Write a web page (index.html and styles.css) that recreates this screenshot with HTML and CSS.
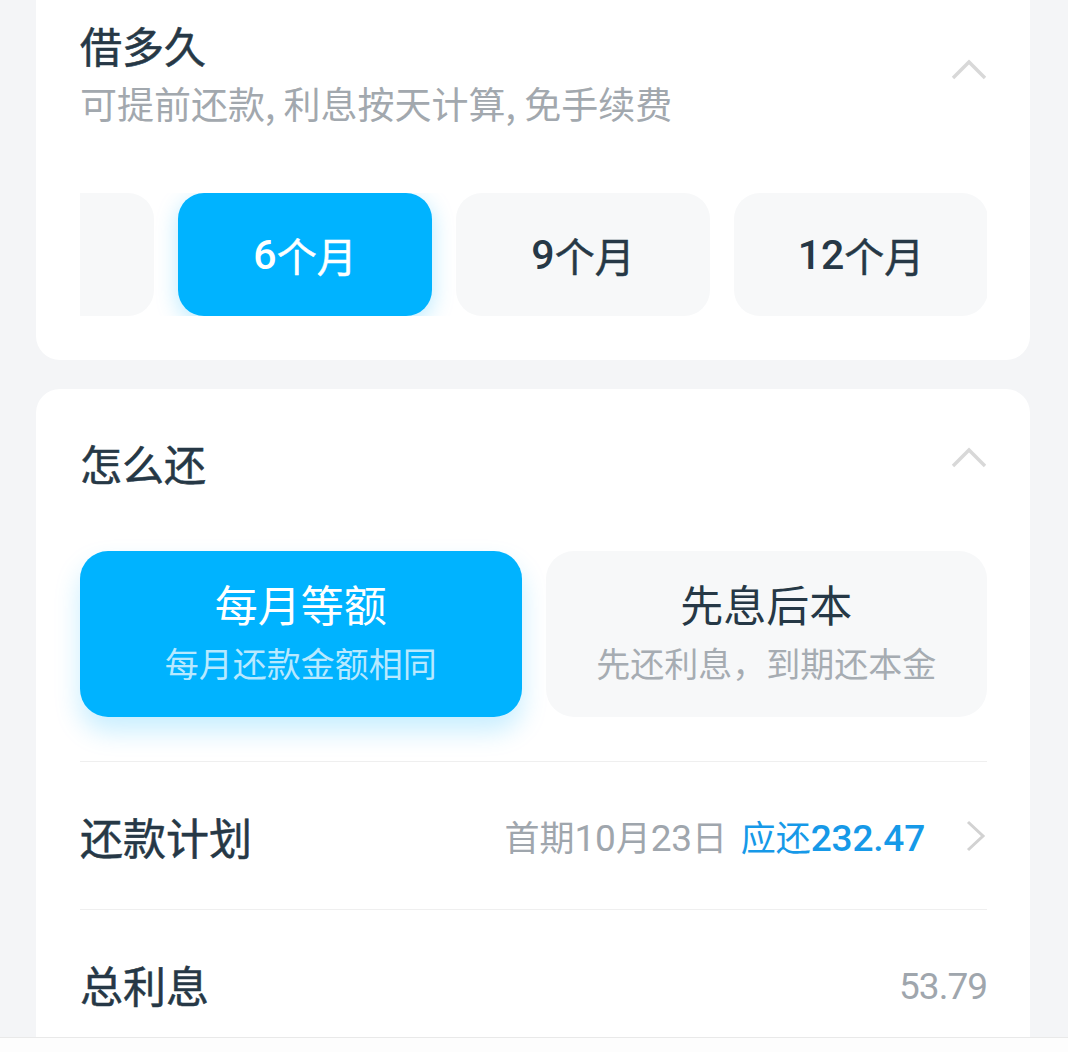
FILE: index.html
```html
<!DOCTYPE html>
<html lang="zh-CN">
<head>
<meta charset="utf-8">
<title>借款</title>
<link rel="stylesheet" href="styles.css">
</head>
<body>
<div class="page">
  <section class="card card-term">
    <div class="card-head">
      <div class="head-text">
        <h2 class="card-title">借多久</h2>
        <p class="card-sub">可提前还款, 利息按天计算, 免手续费</p>
      </div>
      <svg class="chev-up chev-up-term" viewBox="0 0 36 22" width="36" height="22"><polyline points="2,20 18,4 34,20" fill="none" stroke="#d8d8d8" stroke-width="3.4"/></svg>
    </div>
    <div class="term-scroll">
      <div class="term-track">
        <div class="term-btn" aria-label="3个月"></div>
        <div class="term-btn is-active"><span class="num">6</span>个月</div>
        <div class="term-btn"><span class="num">9</span>个月</div>
        <div class="term-btn"><span class="num">12</span>个月</div>
      </div>
    </div>
  </section>

  <section class="card card-repay">
    <div class="card-head">
      <h2 class="card-title">怎么还</h2>
      <svg class="chev-up chev-up-repay" viewBox="0 0 36 22" width="36" height="22"><polyline points="2,20 18,4 34,20" fill="none" stroke="#d8d8d8" stroke-width="3.4"/></svg>
    </div>
    <div class="method-grid">
      <div class="method is-active">
        <div class="method-title">每月等额</div>
        <div class="method-sub">每月还款金额相同</div>
      </div>
      <div class="method">
        <div class="method-title">先息后本</div>
        <div class="method-sub">先还利息，到期还本金</div>
      </div>
    </div>
    <div class="info-row">
      <div class="row-label">还款计划</div>
      <div class="row-value">首期<span class="num">10</span>月<span class="num">23</span>日 <span class="link">应还<span class="num num-strong">232.47</span></span></div>
      <svg class="chev-right" viewBox="0 0 22 32" width="22" height="32"><polyline points="3,2 18,16 3,30" fill="none" stroke="#d2d2d2" stroke-width="3"/></svg>
    </div>
    <div class="info-row">
      <div class="row-label">总利息</div>
      <div class="row-value"><span class="num num-total">53.79</span></div>
    </div>
  </section>
</div>
<div class="footer-bar"></div>
</body>
</html>
```

FILE: styles.css
```css
* { box-sizing: border-box; }
html, body {
  margin: 0;
  padding: 0;
  background: #f4f5f7;
  font-family: "Noto Sans CJK SC", "Noto Sans", sans-serif;
  color: #263846;
}
.page {
  margin-top: -24px;
  padding: 0 38px 40px 36px;
}
.card {
  background: #ffffff;
  border-radius: 24px;
  padding: 44px 43px 44px 44px;
}
.card-repay {
  margin-top: 29px;
  padding-top: 49px;
}
.card-head {
  display: flex;
  justify-content: space-between;
  align-items: flex-start;
}
.card-title {
  margin: 0;
  font-size: 42px;
  line-height: 50px;
  font-weight: 400;
  -webkit-text-stroke: 0.55px #263846;
  color: #263846;
}
.card-sub {
  margin: 10px 0 0;
  font-size: 37px;
  line-height: 46px;
  font-weight: 400;
  color: #a2a8ae;
}
.chev-up { flex: none; display: block; }
.chev-up-term { margin-top: 38px; }
.chev-up-repay { margin-top: 8px; }

.num {
  font-family: Roboto, "Noto Sans", sans-serif;
}

.term-scroll {
  margin-top: 67px;
  height: 123px;
  overflow: hidden;
}
.term-track {
  display: flex;
  gap: 24px;
  margin-left: -180px;
}
.term-btn {
  flex: 0 0 254px;
  height: 123px;
  border-radius: 26px;
  background: #f7f8f9;
  display: flex;
  align-items: center;
  justify-content: center;
  font-size: 40px;
  font-weight: 400;
  -webkit-text-stroke: 0.5px #263846;
  color: #263846;
}
.term-btn .num { font-size: 41px; font-weight: 500; -webkit-text-stroke: 0; }
.term-btn.is-active {
  background: #00b3ff;
  color: #ffffff;
  -webkit-text-stroke: 0.5px #ffffff;
  box-shadow: 0 6px 22px rgba(0, 179, 255, 0.28);
}

.method-grid {
  margin-top: 63px;
  display: grid;
  grid-template-columns: 1fr 1fr;
  gap: 24px;
}
.method {
  height: 166px;
  border-radius: 28px;
  background: #f7f8f9;
  display: flex;
  flex-direction: column;
  align-items: center;
  justify-content: center;
  padding-bottom: 6px;
}
.method-title {
  font-size: 43px;
  line-height: 50px;
  color: #263846;
}
.method-sub {
  margin-top: 14px;
  font-size: 34px;
  line-height: 42px;
  color: #a6acb2;
}
.method.is-active {
  background: #00b3ff;
  box-shadow: 0 14px 26px rgba(0, 179, 255, 0.22);
}
.method.is-active .method-title { color: #ffffff; }
.method.is-active .method-sub { color: rgba(255, 255, 255, 0.72); }

.info-row {
  height: 148px;
  border-top: 1px solid #efefef;
  display: flex;
  align-items: center;
}
.method-grid + .info-row { margin-top: 44px; }
.row-label {
  font-size: 43px;
  font-weight: 400;
  -webkit-text-stroke: 0.5px #263846;
  color: #263846;
}
.row-value {
  margin-left: auto;
  font-size: 35px;
  color: #9fa6ad;
  white-space: nowrap;
}
.row-value .num {
  font-size: 37px;
  letter-spacing: -0.2px;
}
.row-value .num-total {
  font-size: 37px;
  letter-spacing: -1px;
}
.link { color: #1699e8; margin-left: 6px; }
.num-strong { font-weight: 500; }
.chev-right {
  flex: none;
  display: block;
  margin-left: 40px;
}
.footer-bar {
  position: fixed;
  left: 0;
  right: 0;
  bottom: 0;
  height: 15px;
  background: #fdfdfd;
  border-top: 1px solid #e9e9e9;
}
```
